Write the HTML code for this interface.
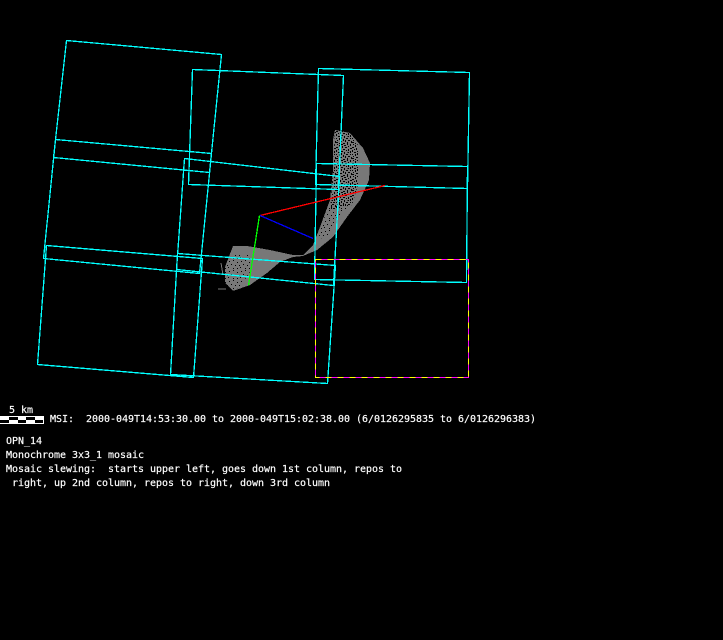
<!DOCTYPE html>
<html>
<head>
<meta charset="utf-8">
<title>OPN_14</title>
<style>
html,body{margin:0;padding:0;background:#000;width:723px;height:640px;overflow:hidden}
svg{display:block}
text{font-family:"DejaVu Sans Mono","Liberation Mono",monospace;font-size:10px;fill:#fff;stroke:#fff;stroke-width:.18;letter-spacing:-.02px;white-space:pre}
</style>
</head>
<body>
<svg xmlns="http://www.w3.org/2000/svg" width="723" height="640" viewBox="0 0 723 640">
<defs>
<pattern id="d1" width="16" height="16" patternUnits="userSpaceOnUse">
<path fill="#000" d="M1 0h1v1H1zM5 0h2v1H5zM11 0h1v1h-1zM14 0h1v2h-1zM3 1h1v2H3zM8 1h2v1H8zM0 3h2v1H0zM6 2h1v2H6zM12 2h1v1h-1zM9 3h2v1H9zM14 4h2v1h-2zM2 5h1v1H2zM4 4h1v2H4zM7 5h2v1H7zM12 5h1v2h-1zM0 6h1v2H0zM10 6h1v1h-1zM5 7h2v1H5zM2 8h2v1H2zM8 8h1v2H8zM14 7h1v2h-1zM11 8h2v1h-1zM0 10h1v1H0zM5 9h1v2H5zM3 10h1v2H3zM10 10h2v1h-2zM14 10h1v1h-1zM7 11h1v2H7zM1 12h1v1H1zM12 12h2v1h-2zM9 12h1v2H9zM4 13h2v1H4zM15 13h1v2h-1zM0 14h2v1H0zM11 14h1v2h-1zM7 15h2v1H7zM3 15h1v1H3z"/>
</pattern>
<pattern id="d2" width="12" height="10" patternUnits="userSpaceOnUse">
<path fill="#000" d="M1 1h1v1H1zM5 0h1v1H5zM9 2h1v1H9zM3 4h1v1H3zM7 5h1v1H7zM11 5h1v1h-1zM0 7h1v1H0zM5 8h1v1H5zM9 8h1v1H9z"/>
</pattern>
<clipPath id="ctop"><path d="M335 130L350 133L358 145L358 185L352 205L330 210L333 170Z"/></clipPath>
<clipPath id="cmid"><path d="M330 200L350 204L336 222L328 235L318 240L322 225Z"/></clipPath>
<clipPath id="clow"><path d="M225 262L232 255L250 255L250 272L240 287L232 291L225 284Z"/></clipPath>
</defs>

<g shape-rendering="crispEdges">
<path fill="#787878" d="M335 130L350 133L363 148L370 163L369 180L360 200L347 217L333 237L317 250L303 256L293 257L280 262L267 273L250 285L233 291L225 283L225 267L233 246L247 246L270 250L293 255L303 255L313 245L320 227L330 200L333 170L333 140Z"/>
<rect x="320" y="125" width="60" height="90" fill="url(#d1)" clip-path="url(#ctop)"/>
<rect x="315" y="200" width="45" height="45" fill="url(#d2)" clip-path="url(#cmid)"/>
<rect x="222" y="250" width="45" height="45" fill="url(#d2)" clip-path="url(#clow)"/>
<path fill="none" stroke="#787878" d="M223 275L221 263M218 289L226 289"/>
</g>

<g fill="none" stroke="#00ffff" stroke-width="1.3" shape-rendering="crispEdges">
<path d="M66.5 40.5L221.5 54.5L209.5 172.5L53.5 157.5Z"/>
<path d="M55.5 139.5L211.5 153.5L199.5 273.5L43.5 258.5Z"/>
<path d="M46.5 245.5L202.5 258.5L193.5 377.5L37.5 364.5Z"/>
<path d="M192.5 69.5L343.5 75.5L338.5 189.5L188.5 184.5Z"/>
<path d="M184.5 158.5L339.5 176.5L333.5 285.5L176.5 269.5Z"/>
<path d="M177.5 253.5L335.5 265.5L327.5 383.5L170.5 374.5Z"/>
<path d="M318.5 68.5L469.5 72.5L467.5 188.5L315.5 184.5Z"/>
<path d="M316.5 163.5L467.5 166.5L466.5 282.5L314.5 279.5Z"/>
</g>

<rect x="315.5" y="259.5" width="153" height="118" fill="none" stroke="#ff00ff" shape-rendering="crispEdges"/>
<rect x="315.5" y="259.5" width="153" height="118" fill="none" stroke="#ffff00" stroke-dasharray="6 6" shape-rendering="crispEdges"/>

<g fill="none" stroke-width="1.3" shape-rendering="crispEdges">
<path stroke="#ff0000" d="M260 215.5L385 185.5"/>
<path stroke="#0000ff" d="M260 215.5L313 238.5"/>
<path stroke="#00ff00" d="M259.5 215.5L248.5 285.5"/>
</g>

<g shape-rendering="crispEdges">
<rect x="0" y="416" width="44" height="8" fill="#fff"/>
<rect x="9" y="417" width="9" height="3" fill="#000"/>
<rect x="26" y="417" width="9" height="3" fill="#000"/>
<rect x="0" y="420" width="9" height="3" fill="#000"/>
<rect x="18" y="420" width="8" height="3" fill="#000"/>
<rect x="35" y="420" width="8" height="3" fill="#000"/>
</g>

<text x="9" y="413">5 km</text>
<text x="50" y="422" xml:space="preserve">MSI:  2000-049T14:53:30.00 to 2000-049T15:02:38.00 (6/0126295835 to 6/0126296383)</text>
<text x="6" y="444">OPN_14</text>
<text x="6" y="458">Monochrome 3x3_1 mosaic</text>
<text x="6" y="472" xml:space="preserve">Mosaic slewing:  starts upper left, goes down 1st column, repos to</text>
<text x="6" y="486" xml:space="preserve"> right, up 2nd column, repos to right, down 3rd column</text>
</svg>
</body>
</html>
